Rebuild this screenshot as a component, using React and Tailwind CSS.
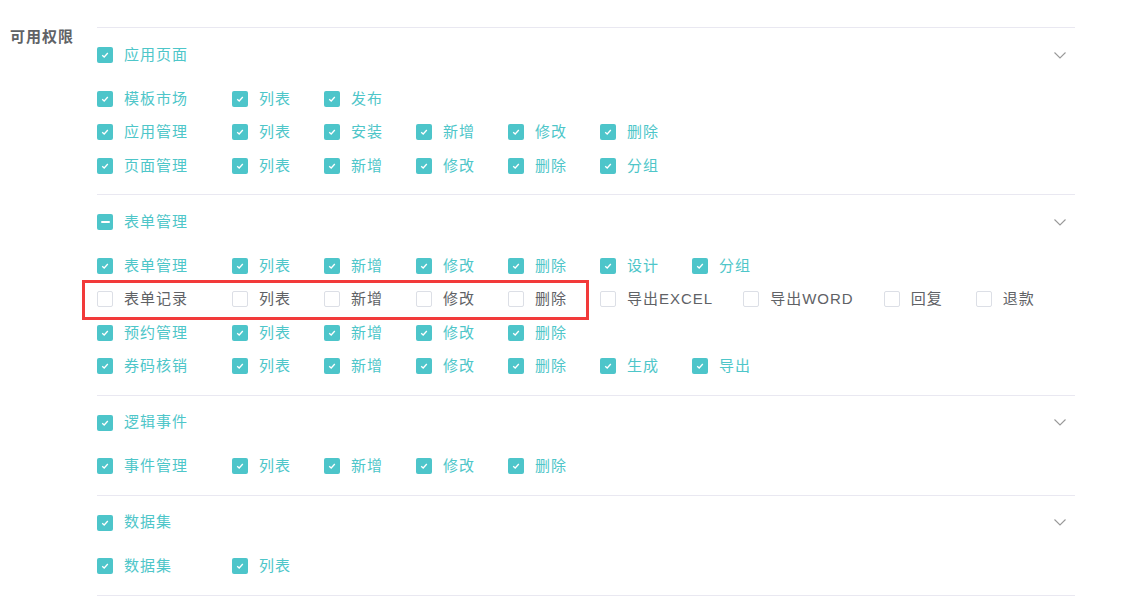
import React from 'react';

const FONT = { fontFamily: '"Liberation Sans", "Noto Sans CJK SC", sans-serif' };

const sections = [
  {
    title: '应用页面',
    state: 'checked',
    rows: [
      { name: '模板市场', checked: true, ops: ['列表', '发布'] },
      { name: '应用管理', checked: true, ops: ['列表', '安装', '新增', '修改', '删除'] },
      { name: '页面管理', checked: true, ops: ['列表', '新增', '修改', '删除', '分组'] },
    ],
  },
  {
    title: '表单管理',
    state: 'indeterminate',
    rows: [
      { name: '表单管理', checked: true, ops: ['列表', '新增', '修改', '删除', '设计', '分组'] },
      {
        name: '表单记录',
        checked: false,
        marked: true,
        ops: ['列表', '新增', '修改', '删除', '导出EXCEL', '导出WORD', '回复', '退款'],
      },
      { name: '预约管理', checked: true, ops: ['列表', '新增', '修改', '删除'] },
      { name: '券码核销', checked: true, ops: ['列表', '新增', '修改', '删除', '生成', '导出'] },
    ],
  },
  {
    title: '逻辑事件',
    state: 'checked',
    rows: [{ name: '事件管理', checked: true, ops: ['列表', '新增', '修改', '删除'] }],
  },
  {
    title: '数据集',
    state: 'checked',
    rows: [{ name: '数据集', checked: true, ops: ['列表'] }],
  },
];

function Box({ state }) {
  if (state === 'unchecked') {
    return <span className="w-4 h-4 shrink-0 rounded-[2px] border border-[#dcdfe6] bg-white" />;
  }
  return (
    <span className="w-4 h-4 shrink-0 rounded-[2px] bg-[#4dc5ca] flex items-center justify-center">
      {state === 'indeterminate' ? (
        <span className="w-[9px] h-[2px] bg-white rounded-[1px]" />
      ) : (
        <svg width="10" height="10" viewBox="0 0 10 10">
          <polyline points="2.2,5.2 4.2,7 7.8,3" fill="none" stroke="#fff" strokeWidth="1.3" />
        </svg>
      )}
    </span>
  );
}

function Check({ label, checked, first }) {
  return (
    <label
      className={
        first
          ? 'w-[135px] shrink-0 flex items-center gap-[11px]'
          : 'min-w-[62px] mr-[30px] flex items-center gap-[11px]'
      }
    >
      <Box state={checked ? 'checked' : 'unchecked'} />
      <span
        className={
          'text-[15px] tracking-[1px] whitespace-nowrap ' +
          (checked ? 'text-[#4ec6c9]' : 'text-[#606266]')
        }
      >
        {label}
      </span>
    </label>
  );
}

function Chevron() {
  return (
    <svg width="12" height="7" viewBox="0 0 12 7">
      <polyline points="0.5,0.5 6,6 11.5,0.5" fill="none" stroke="#999" strokeWidth="1.1" />
    </svg>
  );
}

export default function App() {
  return (
    <div className="w-[1125px] h-[604px] bg-white flex overflow-hidden" style={FONT}>
      <div className="w-[97px] shrink-0 pl-[10px] pt-[25px]">
        <span className="text-[15px] tracking-[1px] leading-[22px] font-bold text-[#606266]">可用权限</span>
      </div>
      <div className="w-[978px] pt-[27px]">
        {sections.map((s, i) => (
          <div
            key={s.title}
            className={'border-t border-[#e9e8f1] pb-[11.5px]' + (i === sections.length - 1 ? ' border-b' : '')}
          >
            <div className="h-[54px] flex items-center justify-between pr-[9px]">
              <div className="flex items-center gap-[11px]">
                <Box state={s.state} />
                <span className="text-[15px] tracking-[1px] text-[#4ec6c9]">{s.title}</span>
              </div>
              <Chevron />
            </div>
            {s.rows.map((r) => (
              <div key={r.name} className="relative h-[33.5px] flex items-center">
                <Check label={r.name} checked={r.checked} first />
                {r.ops.map((op) => (
                  <Check key={op} label={op} checked={r.checked} />
                ))}
                {r.marked && (
                  <div className="absolute left-[-15px] top-[-3px] w-[507px] h-[40px] border-[3px] border-[#f23a3a] pointer-events-none" />
                )}
              </div>
            ))}
          </div>
        ))}
      </div>
    </div>
  );
}
